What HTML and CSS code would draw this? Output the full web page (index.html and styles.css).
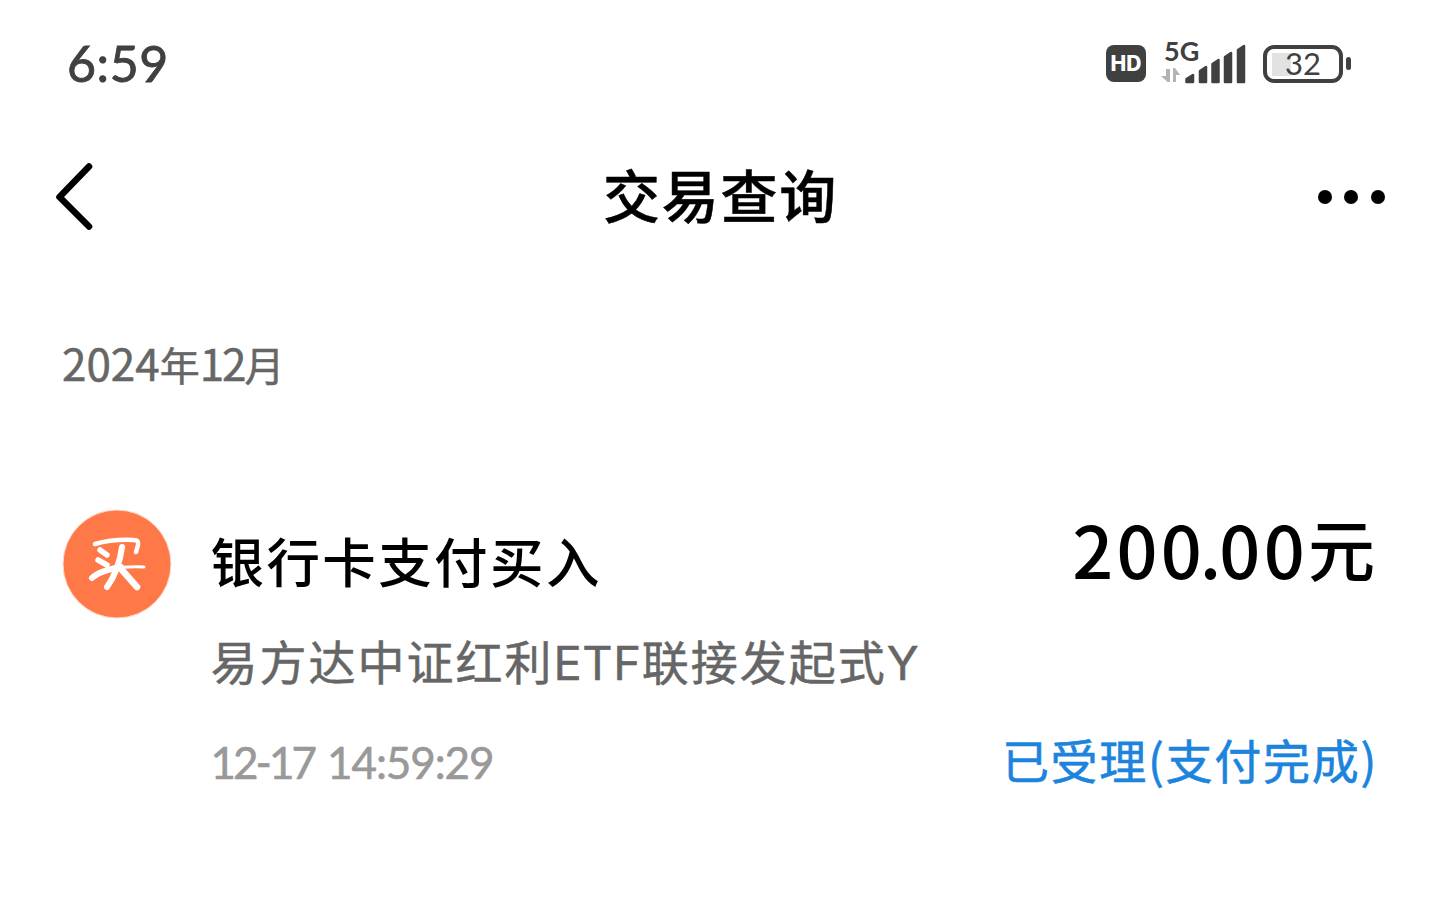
FILE: index.html
```html
<!DOCTYPE html>
<html lang="zh-CN">
<head>
<meta charset="UTF-8"/>
<meta name="viewport" content="width=device-width, initial-scale=1.0"/>
<title>交易查询</title>
<link rel="stylesheet" href="styles.css">
</head>
<body>

<div class="status-bar">
  <span class="time">6:59</span>
  <div class="status-icons">
    <span class="hd">HD</span>
    <div class="signal">
      <svg width="86" height="44" viewBox="0 0 86 44">
        <g fill="#b4b4b4">
          <path d="M9 27v13H6.500L0 34h5v-7z"/>
          <path d="M12 40V26h2l5 7h-4v7z"/>
        </g>
        <g fill="#404040" stroke="#404040" stroke-width="2.500" stroke-linejoin="round">
          <path d="M25.500 37l6.500-4v7h-6.500z"/>
          <path d="M39 29l6-4v15h-6z"/>
          <path d="M51.500 22l6-4v22h-6z"/>
          <path d="M64 15l6-4v29h-6z"/>
          <path d="M77 8l6-4v36h-6z"/>
        </g>
      </svg>
      <span class="net">5G</span>
    </div>
    <div class="battery"><span>32</span></div>
  </div>
</div>

<header class="nav">
  <svg class="back" width="40" height="70" viewBox="0 0 40 70">
    <path d="M34 4.500L4.500 35 34 64.500" fill="none" stroke="#000" stroke-width="6.600" stroke-linecap="round" stroke-linejoin="round"/>
  </svg>
  <h1>交易查询</h1>
  <div class="more"><i></i><i></i><i></i></div>
</header>

<main>
  <h2 class="month"><b>2024</b>年<b class="num">12</b>月</h2>

  <div class="record">
    <svg class="badge" width="110" height="110" viewBox="0 0 110 110">
      <circle cx="55" cy="55" r="54" fill="#ff7848" stroke="#ffdcc8" stroke-width="1"/>
      <g fill="none" stroke="#fff" stroke-width="5" stroke-linecap="round" stroke-linejoin="round">
        <path d="M33 35Q50 30 72 31Q77 31 76 36L74 43" stroke-width="4.500"/>
        <path d="M38 41l7 5M36 51l9 5" stroke-width="5.500"/>
        <path d="M30 69Q37 62 59 58" stroke-width="6"/>
        <path d="M50 60Q65 57 82 58" stroke-width="3"/>
        <path d="M60 38Q57 61 45 78" stroke-width="6"/>
        <path d="M60 61L75 78" stroke-width="6.500"/>
      </g>
    </svg>
    <div class="detail">
      <h3>银行卡支付买入</h3>
      <p class="fund">易方达中证红利<span>ETF</span>联接发起式<span>Y</span></p>
      <p class="date"><span>12-17</span> 14:59:29</p>
    </div>
    <div class="result">
      <p class="amount">20<i>0.</i>00<span>元</span></p>
      <p class="state">已受理(支付完成)</p>
    </div>
  </div>
</main>

</body>
</html>
```

FILE: styles.css
```css
* { box-sizing: border-box; }
body {
  margin: 0; background: #fff; color: #000;
  font-family: "Noto Sans CJK SC", sans-serif;
  white-space: nowrap; overflow: hidden;
}
h1, h2, h3, p { margin: 0; font-weight: 500; }

.status-bar {
  height: 128px; padding: 0 88px 1px 67px;
  display: flex; align-items: center; justify-content: space-between;
  color: #404040;
}
.time {
  font-family: Lato, sans-serif; font-size: 50px; line-height: 60px;
  letter-spacing: .6px; padding-bottom: 2px;
  -webkit-text-stroke: .9px #404040;
}
.status-icons { display: flex; align-items: center; }
.hd {
  width: 40px; height: 37px; border-radius: 8px;
  background: #404040; color: #fff;
  font: 800 21px/38px Inter, sans-serif; text-align: center;
  margin-right: 15px;
}
.signal { position: relative; height: 44px; margin-right: 16px; }
.signal svg { display: block; }
.net {
  position: absolute; left: 3px; top: -7px;
  font: bold 27px/32px Lato, sans-serif;
}
.battery {
  position: relative; width: 80px; height: 38px;
  border: 4px solid #404040; border-radius: 11px;
  font: 31px/29px Lato, sans-serif; text-align: center;
  background: linear-gradient(#e2e2e2, #e2e2e2) 5px 4px / 19px 23px no-repeat;
  margin-right: 9px;
}
.battery::after {
  content: ""; position: absolute; right: -12px; top: 8px;
  width: 5px; height: 13px; border-radius: 3px; background: #404040;
}

.nav {
  height: 137px; padding: 0 55px;
  display: flex; align-items: center; justify-content: space-between;
}
.back { display: block; }
h1 {
  font-size: 57px; line-height: 80px; letter-spacing: 1.8px;
  padding: 0 0 8px 28px; -webkit-text-stroke: .5px #000;
}
.more { display: flex; gap: 12.5px; }
.more i { width: 14px; height: 14px; border-radius: 50%; background: #000; }

main { padding: 64px 62px 0 62px; }
.month {
  font-size: 40px; line-height: 66px; color: #666;
  font-weight: 400; -webkit-text-stroke: .5px #666;
}
.month b { font-size: 44px; font-weight: 400; }
.month .num { letter-spacing: -2px; }

.record { display: flex; padding-top: 112px; }
.badge { display: block; flex: none; }
.detail { padding: 11px 0 0 38.5px; flex: 1; }
h3 { font-size: 53.5px; line-height: 80px; letter-spacing: 2.4px; }
.fund {
  margin-top: 20px; font-size: 47px; line-height: 80px; letter-spacing: 2px;
  color: #666; font-weight: 400; -webkit-text-stroke: .5px #666;
}
.fund span { font-family: Inter, sans-serif; font-size: 47px; letter-spacing: .6px; }
.date {
  margin-top: 29px; font: 44px/60px Lato, sans-serif; letter-spacing: -1.1px;
  word-spacing: 3px;
  color: #999; -webkit-text-stroke: .6px #999;
}
.date span { letter-spacing: -3px; }
.result { text-align: right; }
.amount {
  margin-top: -11px; font-size: 72px; line-height: 100px; letter-spacing: 3.3px;
}
.amount i { font-style: normal; letter-spacing: -2px; }
.amount span { font-size: 67px; line-height: 1; letter-spacing: 0; vertical-align: 3px; margin-right: 3px; }
.state {
  margin-top: 121px; font-size: 47px; line-height: 80px; letter-spacing: 1.7px;
  color: #1c84dc; font-weight: 400; -webkit-text-stroke: .6px #1c84dc;
}
```
